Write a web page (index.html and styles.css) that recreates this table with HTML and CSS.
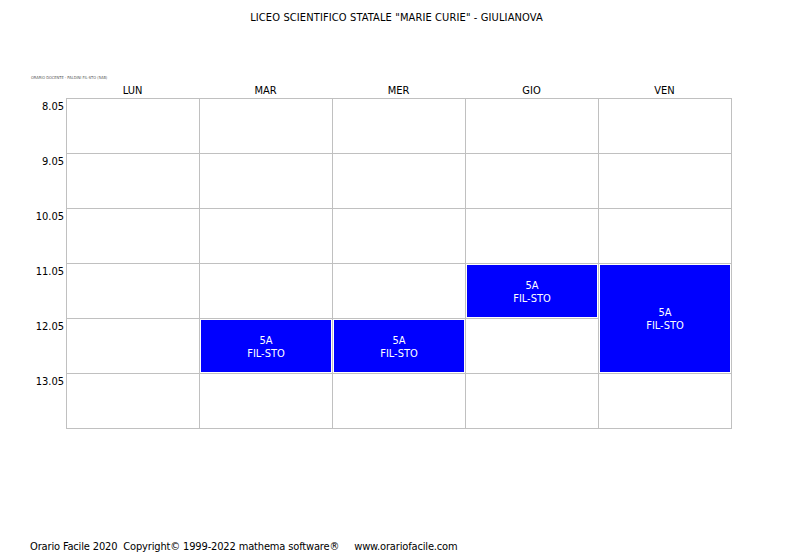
FILE: index.html
```html
<!DOCTYPE html>
<html lang="it">
<head>
<meta charset="utf-8">
<title>Orario docente</title>
<link rel="stylesheet" href="styles.css">
</head>
<body>
<header class="title">LICEO SCIENTIFICO STATALE "MARIE CURIE" - GIULIANOVA</header>
<div class="caption">ORARIO DOCENTE - PALDINI FIL-STO (5AB)</div>
<main class="timetable">
  <div class="corner"></div>
  <div class="days">
    <div class="day">LUN</div>
    <div class="day">MAR</div>
    <div class="day">MER</div>
    <div class="day">GIO</div>
    <div class="day">VEN</div>
  </div>
  <div class="times">
    <div class="time">8.05</div>
    <div class="time">9.05</div>
    <div class="time">10.05</div>
    <div class="time">11.05</div>
    <div class="time">12.05</div>
    <div class="time">13.05</div>
  </div>
  <div class="board">
    <div class="slot d2 h5"><div class="lesson"><span>5A</span><span>FIL-STO</span></div></div>
    <div class="slot d3 h5"><div class="lesson"><span>5A</span><span>FIL-STO</span></div></div>
    <div class="slot d4 h4"><div class="lesson"><span>5A</span><span>FIL-STO</span></div></div>
    <div class="slot d5 h4 span2"><div class="lesson"><span>5A</span><span>FIL-STO</span></div></div>
    <div class="cell"></div><div class="cell"></div><div class="cell"></div><div class="cell"></div><div class="cell"></div>
    <div class="cell"></div><div class="cell"></div><div class="cell"></div><div class="cell"></div><div class="cell"></div>
    <div class="cell"></div><div class="cell"></div><div class="cell"></div><div class="cell"></div><div class="cell"></div>
    <div class="cell"></div><div class="cell"></div><div class="cell"></div><div class="cell"></div><div class="cell"></div>
    <div class="cell"></div><div class="cell"></div><div class="cell"></div><div class="cell"></div><div class="cell"></div>
  </div>
</main>
<footer class="footer">Orario Facile 2020  Copyright© 1999-2022 mathema software®     www.orariofacile.com</footer>
</body>
</html>
```

FILE: styles.css
```css
html, body {
  margin: 0;
  padding: 0;
  background: #ffffff;
}

body {
  width: 793px;
  height: 559px;
  overflow: hidden;
  font-family: "DejaVu Sans Condensed", "DejaVu Sans", sans-serif;
  font-stretch: semi-condensed;
  font-size: 11px;
  color: #000000;
}

.title {
  text-align: center;
  line-height: 13px;
  padding-top: 11px;
  height: 13px;
  letter-spacing: 0.12px;
}

.caption {
  margin-top: 51px;
  margin-left: 31px;
  font-size: 4px;
  line-height: 5px;
  height: 5px;
  color: #555555;
  white-space: nowrap;
}

.timetable {
  display: grid;
  grid-template-columns: 66px 666px;
  grid-template-rows: 18px 331px;
}

.days {
  display: grid;
  grid-template-columns: repeat(5, 133px);
}

.day {
  text-align: center;
  line-height: 13px;
  padding-top: 4px;
}

.times {
  display: grid;
  grid-template-rows: repeat(6, 55px);
  padding-top: 2px;
}

.time {
  text-align: right;
  padding-right: 2px;
  font-size: 11px;
  line-height: 14px;
}

.board {
  display: grid;
  grid-template-columns: repeat(5, 132px);
  grid-template-rows: repeat(6, 54px);
  gap: 1px;
  padding: 1px;
  background: #c0c0c0;
}

.cell {
  background: #ffffff;
}

.slot {
  background: #ffffff;
  padding: 1px;
  display: flex;
}

.d2 { grid-column: 2; }
.d3 { grid-column: 3; }
.d4 { grid-column: 4; }
.d5 { grid-column: 5; }
.h4 { grid-row: 4; }
.h5 { grid-row: 5; }
.span2 { grid-row: 4 / span 2; }

.lesson {
  flex: 1;
  background: #0000ff;
  color: #ffffff;
  display: flex;
  flex-direction: column;
  align-items: center;
  justify-content: center;
  line-height: 13px;
  padding-top: 1px;
}

.footer {
  margin-top: 111px;
  margin-left: 30px;
  white-space: pre;
  line-height: 13px;
  letter-spacing: -0.15px;
}
```
